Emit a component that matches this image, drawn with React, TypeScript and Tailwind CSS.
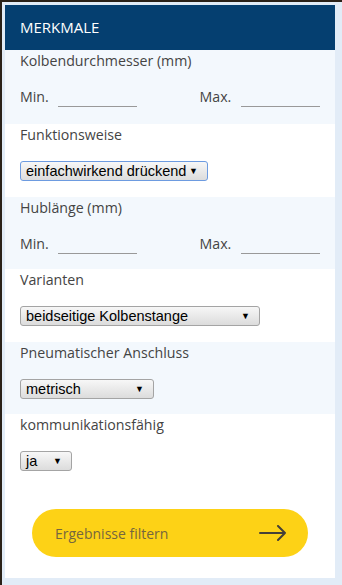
import React from 'react';

const labelCls = "h-[22px] leading-[22px] text-[14.2px] text-[#444]";

const Select = ({ value, width, focused }: { value: string; width: string; focused?: boolean }) => (
  <div
    className={`mt-[15px] h-[20px] ${width} flex items-center justify-between pl-[5px] pr-[9px] rounded-[3px] border bg-gradient-to-b from-[#f7f7f7] to-[#dcdcdc] text-[14.5px] leading-none text-black ${focused ? "border-[#6d9be0]" : "border-[#a4a4a4]"}`}
    style={{ fontFamily: '"Liberation Sans", Arial, sans-serif' }}
  >
    <span>{value}</span>
    <span className="text-[9px]">▼</span>
  </div>
);

const MinMax = () => (
  <div className="mt-[15px] h-[20px] flex items-center text-[14.2px] text-[#444]">
    <span className="w-[38px]">Min.</span>
    <div className="w-[79px] h-[20px] border-b border-[#999]" />
    <span className="ml-[63px] w-[42px]">Max.</span>
    <div className="w-[79px] h-[20px] border-b border-[#999]" />
  </div>
);

const App = () => {
  return (
    <div
      className="w-[342px] h-[585px] bg-[#e2ecf7] border-l-2 border-t-2 border-[#2a2118] pl-[3px] pt-[3px] overflow-hidden"
      style={{ fontFamily: '"Open Sans", sans-serif' }}
    >
      <div className="w-[330px] h-[573px] bg-white flex flex-col">
        <div className="h-[45px] bg-[#053f70] flex items-center px-[15px] text-[15px] text-white">MERKMALE</div>

        <div className="h-[74px] bg-[#f3f8fd] px-[15px]">
          <div className={labelCls}>Kolbendurchmesser (mm)</div>
          <MinMax />
        </div>

        <div className="h-[73px] px-[15px]">
          <div className={labelCls}>Funktionsweise</div>
          <Select value="einfachwirkend drückend" width="w-[188px]" focused />
        </div>

        <div className="h-[72px] bg-[#f3f8fd] px-[15px]">
          <div className={labelCls}>Hublänge (mm)</div>
          <MinMax />
        </div>

        <div className="h-[73px] px-[15px]">
          <div className={labelCls}>Varianten</div>
          <Select value="beidseitige Kolbenstange" width="w-[240px]" />
        </div>

        <div className="h-[72px] bg-[#f3f8fd] px-[15px]">
          <div className={labelCls}>Pneumatischer Anschluss</div>
          <Select value="metrisch" width="w-[134px]" />
        </div>

        <div className="flex-1 px-[15px]">
          <div className={labelCls}>kommunikationsfähig</div>
          <Select value="ja" width="w-[52px]" />
          <div className="mt-[38px] ml-[12px] w-[276px] h-[48px] rounded-full bg-[#fdd216] flex items-center justify-between pl-[23px] pr-[21px]">
            <span className="text-[14px] text-[#75663f]">Ergebnisse filtern</span>
            <svg width="28" height="16" viewBox="0 0 28 16" fill="none" stroke="#454038" strokeWidth="2" strokeLinecap="round" strokeLinejoin="round">
              <path d="M1 8h25M19 1l7 7-7 7" />
            </svg>
          </div>
        </div>
      </div>
    </div>
  );
};

export default App;
